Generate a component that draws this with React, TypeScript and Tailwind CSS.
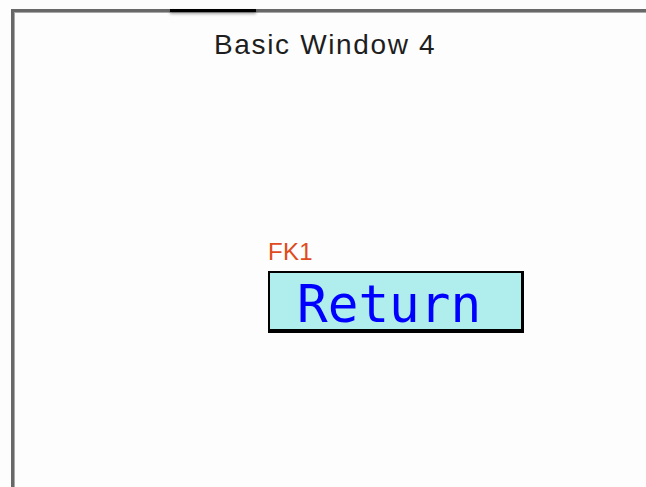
import React from "react";

export default function App() {
    return (
        <div className="relative w-[646px] h-[487px] overflow-hidden bg-[#fdfdfd] pl-[11px] pt-[9px]">
            {/* Window frame */}
            <div className="h-full border-l-[3px] border-t-[3px] border-[#686868] bg-[#fdfdfd]">
                <div className="h-full border-l border-t border-[#a8a8a8]">
                    {/* Title */}
                    <p
                        className="pl-[199px] pt-[18px] text-[28px] leading-none tracking-[1.65px] text-[#1e1e1e]"
                        style={{ fontFamily: '"Liberation Sans", Arial, sans-serif' }}
                    >
                        Basic Window 4
                    </p>

                    {/* Function key button */}
                    <div className="ml-[253px] mt-[181px] flex flex-col">
                        <span
                            className="text-[24px] leading-none tracking-[0.3px] text-[#e04a1c]"
                            style={{ fontFamily: '"Liberation Sans", Arial, sans-serif' }}
                        >
                            FK1
                        </span>
                        <div className="mt-[7px] w-[256px] h-[62px] border-t-2 border-l-2 border-r-[3px] border-b-4 border-black bg-[#b0eeee] pl-[27px] pt-[6px]">
                            <span
                                className="text-[51px] leading-none text-[#0000ff]"
                                style={{ fontFamily: '"DejaVu Sans Mono", monospace' }}
                            >
                                Return
                            </span>
                        </div>
                    </div>
                </div>
            </div>

            {/* Tab marker on the top edge */}
            <div className="absolute left-[170px] top-[9px] w-[86px] h-[3px] bg-black shadow-[0_2px_3px_rgba(0,0,0,0.35)]" />
        </div>
    );
}
